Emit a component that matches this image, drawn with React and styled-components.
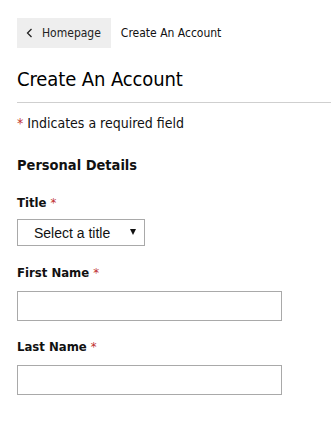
import React from 'react';
import styled, { createGlobalStyle } from 'styled-components';

const GlobalStyle = createGlobalStyle`
  html, body {
    margin: 0;
    padding: 0;
    background: #fff;
  }
  body {
    font-family: 'DejaVu Sans Condensed', 'DejaVu Sans', sans-serif;
    color: #111;
  }
`

const Page = styled.div`
  padding: 18px 0 0 17px;
`

const Breadcrumbs = styled.nav`
  display: flex;
  align-items: center;
  height: 30px;
  font-size: 12px;
`

const BackLink = styled.a`
  display: flex;
  align-items: center;
  gap: 9px;
  height: 100%;
  padding: 0 10px 0 9px;
  background: #eeeeee;
  color: #222;
  text-decoration: none;
`

const Current = styled.span`
  padding-left: 10px;
  color: #111;
`

const Heading = styled.h1`
  margin: 19px 0 0;
  font-size: 20px;
  font-weight: normal;
  line-height: 24px;
  color: #000;
  letter-spacing: -0.1px;
`

const Rule = styled.hr`
  margin: 11px 0 0;
  border: 0;
  border-top: 1px solid #cfcfcf;
`

const Note = styled.p`
  margin: 12px 0 0;
  font-size: 14px;
  line-height: 16px;
`

const Req = styled.span`
  color: #c0302f;
  font-weight: normal;
`

const Section = styled.h2`
  margin: 25px 0 0;
  font-size: 14.5px;
  font-weight: bold;
  line-height: 18px;
`

const Field = styled.div`
  margin-top: ${p => p.$top}px;
  display: flex;
  flex-direction: column;
  align-items: flex-start;
`

const Label = styled.label`
  font-size: 13px;
  font-weight: bold;
  line-height: 16px;
`

const SelectBox = styled.div`
  position: relative;
  margin-top: 8px;
  width: 128px;
  height: 27px;
  box-sizing: border-box;
  border: 1px solid #a9a9a9;
  background: #fff;
`

const Select = styled.select`
  appearance: none;
  width: 100%;
  height: 100%;
  border: 0;
  background: transparent;
  padding: 0 0 0 16px;
  font-family: 'Liberation Sans', Arial, sans-serif;
  font-size: 14px;
  color: #111;
  outline: none;
`

const Caret = styled.span`
  position: absolute;
  right: 8px;
  top: 9px;
  width: 0;
  height: 0;
  border-left: 3px solid transparent;
  border-right: 3px solid transparent;
  border-top: 6px solid #111;
  pointer-events: none;
`

const Input = styled.input`
  margin-top: 10px;
  width: 265px;
  height: 30px;
  box-sizing: border-box;
  border: 1px solid #a9a9a9;
  padding: 0 6px;
  font-size: 13px;
  outline: none;
`

const Chevron = () => (
  <svg width="7" height="10" viewBox="0 0 7 10" fill="none">
    <path d="M5.5 1 L1.5 5 L5.5 9" stroke="#222" strokeWidth="1.3" />
  </svg>
)

export default function App() {
  return (
    <>
      <GlobalStyle />
      <Page>
        <Breadcrumbs>
          <BackLink href="#"><Chevron />Homepage</BackLink>
          <Current>Create An Account</Current>
        </Breadcrumbs>
        <Heading>Create An Account</Heading>
        <Rule />
        <Note><Req>*</Req> Indicates a required field</Note>
        <Section>Personal Details</Section>
        <Field $top={21}>
          <Label>Title <Req>*</Req></Label>
          <SelectBox>
            <Select defaultValue="">
              <option value="">Select a title</option>
              <option>Mr</option>
              <option>Mrs</option>
              <option>Ms</option>
              <option>Dr</option>
            </Select>
            <Caret />
          </SelectBox>
        </Field>
        <Field $top={19}>
          <Label>First Name <Req>*</Req></Label>
          <Input type="text" />
        </Field>
        <Field $top={18}>
          <Label>Last Name <Req>*</Req></Label>
          <Input type="text" />
        </Field>
      </Page>
    </>
  )
}
